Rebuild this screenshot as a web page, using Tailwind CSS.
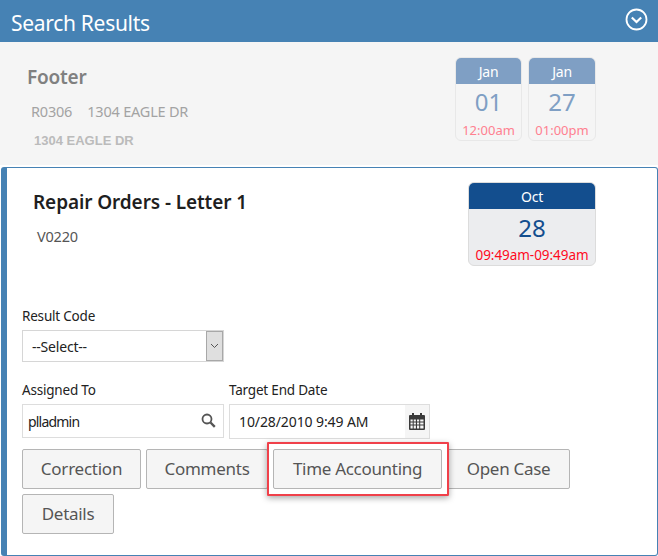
<!DOCTYPE html>
<html lang="en">
<head>
<meta charset="UTF-8">
<script src="https://cdn.jsdelivr.net/npm/@tailwindcss/browser@4"></script>
<title>Search Results</title>
</head>
<body class="bg-white font-['Noto_Sans',sans-serif] w-[658px] h-[556px] overflow-hidden">
  <!-- header -->
  <div class="h-[42px] bg-[#4682b4] flex items-center justify-between pl-[11px] pr-[10px]">
    <h1 class="text-[21px] text-white tracking-[-0.3px] mt-[5px]">Search Results</h1>
    <svg class="w-[23px] h-[23px] mb-[3px]" viewBox="0 0 23 23" fill="none" stroke="white">
      <circle cx="11.5" cy="11.5" r="10" stroke-width="1.8"/>
      <path d="M6.8 9.5l4.7 4.500 4.7-4.500" stroke-width="2.2"/>
    </svg>
  </div>

  <!-- footer result -->
  <div class="h-[123px] bg-[#f5f5f5] flex justify-between pt-[15px] pl-[27px] pr-[62px]">
    <div class="pt-[7px]">
      <div class="text-[19px] leading-[26px] font-semibold text-[#808080] tracking-[-0.2px]">Footer</div>
      <div class="text-[14.5px] leading-[20px] text-[#a3a3a3] pl-[4px] mt-[11px] flex gap-[15px] tracking-[-0.2px]"><span>R0306</span><span>1304 EAGLE DR</span></div>
      <div class="text-[13px] leading-[18px] font-bold text-[#bbbbbb] pl-[7px] mt-[11px] font-['Liberation_Sans',sans-serif]">1304 EAGLE DR</div>
    </div>
    <div class="flex gap-[6px]">
      <div class="w-[67px] h-[84px] rounded-[6px] border border-[#e8e8e8] overflow-hidden text-center">
        <div class="h-[26px] bg-[#7f9fc4] text-white text-[14px] leading-[27px] tracking-[-0.2px]">Jan</div>
        <div class="text-[24px] leading-[36px] text-[#7f9fc4]">01</div>
        <div class="text-[13px] leading-[16px] mt-[2px] text-[#ff8090]">12:00am</div>
      </div>
      <div class="w-[68px] h-[84px] rounded-[6px] border border-[#e8e8e8] overflow-hidden text-center">
        <div class="h-[26px] bg-[#7f9fc4] text-white text-[14px] leading-[27px] tracking-[-0.2px]">Jan</div>
        <div class="text-[24px] leading-[36px] text-[#7f9fc4]">27</div>
        <div class="text-[13px] leading-[16px] mt-[2px] text-[#ff8090]">01:00pm</div>
      </div>
    </div>
  </div>

  <!-- active card -->
  <div class="mt-[2px] ml-px w-[657px] h-[389px] border border-[#4682b4] border-l-[6px] rounded-[3px] pl-[15px]">
    <div class="flex justify-between pr-[61px] pt-[14px] h-[128px]">
      <div class="pl-[11px]">
        <div class="text-[19px] leading-[26px] font-semibold text-[#1f1f1f] tracking-[-0.1px] mt-[7px]">Repair Orders - Letter 1</div>
        <div class="text-[14.5px] leading-[20px] text-[#555555] pl-[4px] mt-[11px] tracking-[-0.2px]">V0220</div>
      </div>
      <div class="w-[128px] h-[84px] rounded-[6px] border border-[#dcdcdc] overflow-hidden text-center bg-[#ecedef]">
        <div class="h-[26px] bg-[#134e8e] text-white text-[14px] leading-[27px] tracking-[-0.2px]">Oct</div>
        <div class="text-[24px] leading-[36px] mt-[1px] text-[#134e8e]">28</div>
        <div class="text-[13.5px] leading-[16px] mt-[1px] text-[#ff0a1e] tracking-[-0.05px]">09:49am-09:49am</div>
      </div>
    </div>

    <label class="block text-[13.5px] leading-[20px] text-[#222222] mt-[10px] tracking-[-0.2px]">Result Code</label>
    <div class="mt-[4px] w-[202px] h-[32px] border border-[#d6d6d6] bg-white flex items-center justify-between pl-[9px] text-[14px] text-[#222222] tracking-[-0.2px]">
      <span>--Select--</span>
      <span class="w-[17px] h-[30px] bg-[#dfdfdf] border border-[#a8a8a8] flex items-center justify-center">
        <svg class="w-[9px] h-[6px]" viewBox="0 0 9 6" fill="none" stroke="#555555"><path d="M1 1l3.500 3.500L8 1"/></svg>
      </span>
    </div>

    <div class="flex gap-[5px] mt-[18px]">
      <div>
        <label class="block text-[13.5px] leading-[20px] text-[#222222] tracking-[-0.2px]">Assigned To</label>
        <div class="mt-[4px] w-[202px] h-[34px] border border-[#dddddd] flex items-center justify-between pl-[5px] pr-[7px] text-[14px] text-[#222222] tracking-[-0.8px]">
          <span>plladmin</span>
          <svg class="w-[15px] h-[15px] mb-[1px]" viewBox="0 0 15 15" fill="none" stroke="#555555"><circle cx="6" cy="6" r="4.500" stroke-width="1.800"/><path d="M9.500 9.500l4.300 4.300" stroke-width="2.400"/></svg>
        </div>
      </div>
      <div>
        <label class="block text-[13.5px] leading-[20px] text-[#222222] tracking-[-0.2px]">Target End Date</label>
        <div class="mt-[4px] w-[201px] h-[35px] border border-[#dddddd] flex items-center justify-between pl-[9px] text-[14px] text-[#222222] tracking-[-0.1px]">
          <span>10/28/2010 9:49 AM</span>
          <span class="w-[24px] h-[33px] bg-[#f5f5f5] flex items-center justify-center">
            <svg class="w-[16px] h-[17px]" viewBox="0 0 16 17"><path fill="#3a3a3a" fill-rule="evenodd" d="M3 0h2v2h6V0h2v2h2a1 1 0 0 1 1 1v13a1 1 0 0 1-1 1H1a1 1 0 0 1-1-1V3a1 1 0 0 1 1-1h2zM1.500 6.500v2h2.200v-2zm3.200 0v2h2.200v-2zm3.300 0v2h2.200v-2zm3.200 0v2h3.300v-2zM1.500 9.500v2h2.200v-2zm3.200 0v2h2.200v-2zm3.300 0v2h2.200v-2zm3.200 0v2h3.300v-2zM1.500 12.500v3h2.200v-3zm3.200 0v3h2.200v-3zm3.300 0v3h2.200v-3zm3.200 0v3h3.300v-3z"/></svg>
          </span>
        </div>
      </div>
    </div>

    <div class="flex flex-wrap gap-x-[5px] gap-y-[5px] mt-[10px] w-[560px]">
      <button class="h-[40px] w-[119px] bg-[#f5f5f5] border border-[#b5b5b5] rounded-[2px] text-[17px] text-[#555555] tracking-[-0.25px]">Correction</button>
      <button class="h-[40px] w-[122px] bg-[#f5f5f5] border border-[#b5b5b5] rounded-[2px] text-[17px] text-[#555555] tracking-[-0.25px]">Comments</button>
      <button class="h-[40px] w-[169px] bg-[#f5f5f5] border border-[#b5b5b5] rounded-[2px] text-[17px] text-[#555555] tracking-[-0.3px] relative">Time Accounting
        <span class="absolute -left-[7px] -right-[8px] -top-[8px] -bottom-[8px] border-2 border-[#f0404a] shadow-[0_2px_6px_rgba(0,0,0,0.35)] rounded-[1px]"></span>
      </button>
      <button class="h-[40px] w-[123px] bg-[#f5f5f5] border border-[#b5b5b5] rounded-[2px] text-[17px] text-[#555555] tracking-[-0.3px]">Open Case</button>
      <button class="h-[40px] w-[92px] bg-[#f5f5f5] border border-[#b5b5b5] rounded-[2px] text-[17px] text-[#555555] tracking-[-0.3px]">Details</button>
    </div>
  </div>
</body>
</html>
